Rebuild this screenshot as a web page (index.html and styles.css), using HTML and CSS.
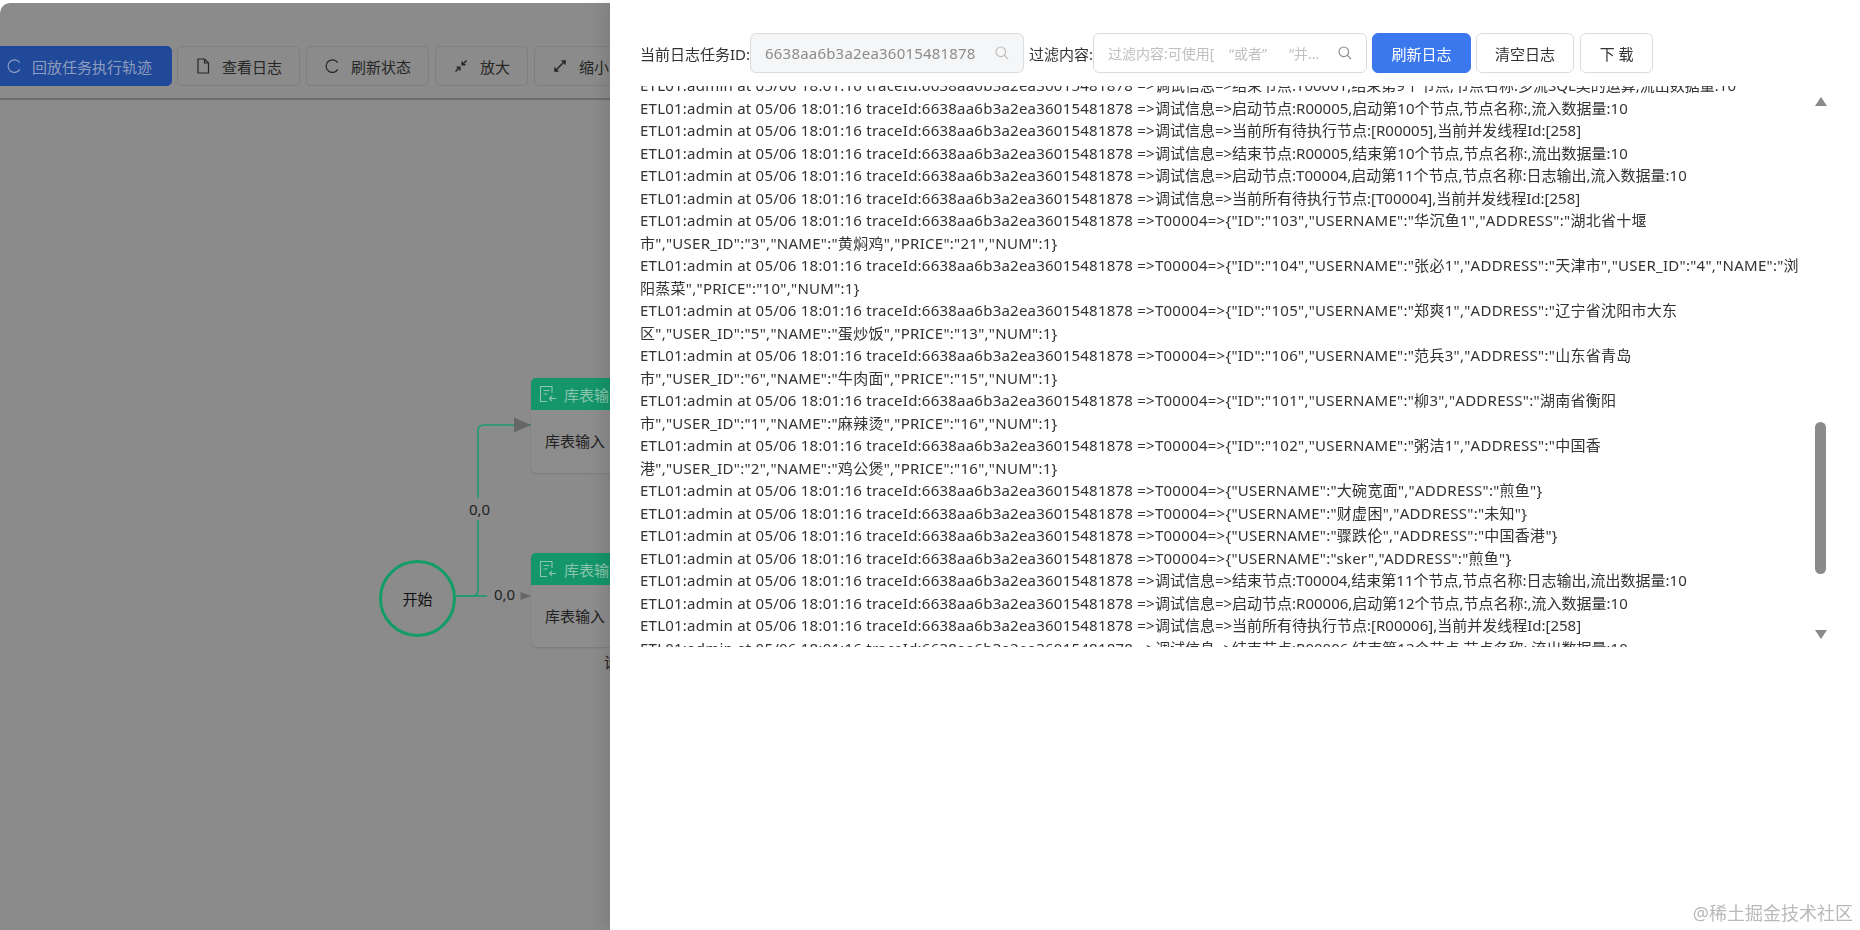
FILE: index.html
```html
<!DOCTYPE html>
<html lang="zh">
<head>
<meta charset="utf-8">
<title>任务执行日志</title>
<link rel="stylesheet" href="styles.css">
</head>
<body>
<div class="app">
  <div class="toolbar">
    <button class="tool tool-primary"><svg class="ico" viewBox="0 0 14 14"><path d="M12.6 3.6A6.3 6.3 0 1 0 12.8 10.4"/></svg>回放任务执行轨迹</button>
    <button class="tool"><svg class="ico" viewBox="0 0 14 16"><path d="M2 1h6.5L12.5 5v10H2z"/><path d="M8.5 1v4h4"/></svg>查看日志</button>
    <button class="tool"><svg class="ico" viewBox="0 0 14 14"><path d="M12.6 3.6A6.3 6.3 0 1 0 12.8 10.4"/></svg>刷新状态</button>
    <button class="tool"><svg class="ico ico-heavy" viewBox="0 0 14 14"><path d="M1.5 12.5L5.5 8.5M5.8 11.4V8.2H2.6M12.5 1.5L8.5 5.5M8.2 2.6v3.2h3.2"/></svg>放大</button>
    <button class="tool"><svg class="ico ico-heavy" viewBox="0 0 14 14"><path d="M2 12L12 2M2 8.5V12h3.5M8.5 2H12v3.5"/></svg>缩小</button>
  </div>
  <div class="canvas">
    <svg class="edges" viewBox="0 0 610 830">
      <path class="edge" d="M456 496H472Q478 496 478 490V331Q478 325 484 325H531"/>
      <path class="edge" d="M456 496H487"/>
      <path class="arrow" d="M514 317.500L531 325L514 332.500z"/>
      <path class="arrow" d="M520.500 492L531 496L520.500 500z"/>
    </svg>
    <div class="start">开始</div>
    <span class="edge-label label-up">0,0</span>
    <span class="edge-label label-right">0,0</span>
    <div class="node node-a">
      <div class="node-head"><svg class="node-ico" viewBox="0 0 18 18"><path d="M13 8V1.500H1.500v15H8M4.500 5.500h6M4.500 9h4M17 13.500H10.500M13 11l-2.500 2.500L13 16"/></svg>库表输入</div>
      <div class="node-body">库表输入</div>
    </div>
    <div class="node node-b">
      <div class="node-head"><svg class="node-ico" viewBox="0 0 18 18"><path d="M13 8V1.500H1.500v15H8M4.500 5.500h6M4.500 9h4M17 13.500H10.500M13 11l-2.500 2.500L13 16"/></svg>库表输入</div>
      <div class="node-body">库表输入</div>
    </div>
    <span class="node-caption">设</span>
  </div>
</div>

<aside class="drawer">
  <div class="filter-row">
    <label class="filter-label">当前日志任务ID:</label>
    <div class="field field-disabled field-id"><span class="field-text field-value">6638aa6b3a2ea36015481878</span><svg class="search" viewBox="0 0 14 14"><circle cx="5.800" cy="5.800" r="4.800"/><path d="M9.400 9.400L13 13"/></svg></div>
    <label class="filter-label">过滤内容:</label>
    <div class="field field-filter"><span class="field-text field-hint">过滤内容:可使用[&nbsp;&nbsp;&nbsp;&nbsp;“或者”&nbsp;&nbsp;&nbsp;&nbsp;&nbsp;&nbsp;“并...</span><svg class="search search-dark" viewBox="0 0 14 14"><circle cx="5.800" cy="5.800" r="4.800"/><path d="M9.400 9.400L13 13"/></svg></div>
    <button class="btn btn-primary">刷新日志</button>
    <button class="btn btn-clear">清空日志</button>
    <button class="btn btn-down">下 载</button>
  </div>
  <div class="log-wrap">
    <div class="log">
      <div class="log-inner">
        <p class="line"><span class="prefix">ETL01:admin at 05/06 18:01:16 traceId:6638aa6b3a2ea36015481878 =&gt;</span>调试信息=&gt;结束节点:T00001,结束第9个节点,节点名称:多流SQL类的运算,流出数据量:10</p>
        <p class="line"><span class="prefix">ETL01:admin at 05/06 18:01:16 traceId:6638aa6b3a2ea36015481878 =&gt;</span>调试信息=&gt;启动节点:R00005,启动第10个节点,节点名称:,流入数据量:10</p>
        <p class="line"><span class="prefix">ETL01:admin at 05/06 18:01:16 traceId:6638aa6b3a2ea36015481878 =&gt;</span>调试信息=&gt;当前所有待执行节点:[R00005],当前并发线程Id:[258]</p>
        <p class="line"><span class="prefix">ETL01:admin at 05/06 18:01:16 traceId:6638aa6b3a2ea36015481878 =&gt;</span>调试信息=&gt;结束节点:R00005,结束第10个节点,节点名称:,流出数据量:10</p>
        <p class="line"><span class="prefix">ETL01:admin at 05/06 18:01:16 traceId:6638aa6b3a2ea36015481878 =&gt;</span>调试信息=&gt;启动节点:T00004,启动第11个节点,节点名称:日志输出,流入数据量:10</p>
        <p class="line"><span class="prefix">ETL01:admin at 05/06 18:01:16 traceId:6638aa6b3a2ea36015481878 =&gt;</span>调试信息=&gt;当前所有待执行节点:[T00004],当前并发线程Id:[258]</p>
        <p class="line line-data"><span class="prefix">ETL01:admin at 05/06 18:01:16 traceId:6638aa6b3a2ea36015481878 =&gt;</span>T00004=&gt;{"ID":"103","USERNAME":"华沉鱼1","ADDRESS":"湖北省十堰<br>市","USER_ID":"3","NAME":"黄焖鸡","PRICE":"21","NUM":1}</p>
        <p class="line line-data"><span class="prefix">ETL01:admin at 05/06 18:01:16 traceId:6638aa6b3a2ea36015481878 =&gt;</span>T00004=&gt;{"ID":"104","USERNAME":"张必1","ADDRESS":"天津市","USER_ID":"4","NAME":"浏<br>阳蒸菜","PRICE":"10","NUM":1}</p>
        <p class="line line-data"><span class="prefix">ETL01:admin at 05/06 18:01:16 traceId:6638aa6b3a2ea36015481878 =&gt;</span>T00004=&gt;{"ID":"105","USERNAME":"郑爽1","ADDRESS":"辽宁省沈阳市大东<br>区","USER_ID":"5","NAME":"蛋炒饭","PRICE":"13","NUM":1}</p>
        <p class="line line-data"><span class="prefix">ETL01:admin at 05/06 18:01:16 traceId:6638aa6b3a2ea36015481878 =&gt;</span>T00004=&gt;{"ID":"106","USERNAME":"范兵3","ADDRESS":"山东省青岛<br>市","USER_ID":"6","NAME":"牛肉面","PRICE":"15","NUM":1}</p>
        <p class="line line-data"><span class="prefix">ETL01:admin at 05/06 18:01:16 traceId:6638aa6b3a2ea36015481878 =&gt;</span>T00004=&gt;{"ID":"101","USERNAME":"柳3","ADDRESS":"湖南省衡阳<br>市","USER_ID":"1","NAME":"麻辣烫","PRICE":"16","NUM":1}</p>
        <p class="line line-data"><span class="prefix">ETL01:admin at 05/06 18:01:16 traceId:6638aa6b3a2ea36015481878 =&gt;</span>T00004=&gt;{"ID":"102","USERNAME":"粥洁1","ADDRESS":"中国香<br>港","USER_ID":"2","NAME":"鸡公煲","PRICE":"16","NUM":1}</p>
        <p class="line line-data"><span class="prefix">ETL01:admin at 05/06 18:01:16 traceId:6638aa6b3a2ea36015481878 =&gt;</span>T00004=&gt;{"USERNAME":"大碗宽面","ADDRESS":"煎鱼"}</p>
        <p class="line line-data"><span class="prefix">ETL01:admin at 05/06 18:01:16 traceId:6638aa6b3a2ea36015481878 =&gt;</span>T00004=&gt;{"USERNAME":"财虚困","ADDRESS":"未知"}</p>
        <p class="line line-data"><span class="prefix">ETL01:admin at 05/06 18:01:16 traceId:6638aa6b3a2ea36015481878 =&gt;</span>T00004=&gt;{"USERNAME":"骤跌伦","ADDRESS":"中国香港"}</p>
        <p class="line line-data"><span class="prefix">ETL01:admin at 05/06 18:01:16 traceId:6638aa6b3a2ea36015481878 =&gt;</span>T00004=&gt;{"USERNAME":"sker","ADDRESS":"煎鱼"}</p>
        <p class="line"><span class="prefix">ETL01:admin at 05/06 18:01:16 traceId:6638aa6b3a2ea36015481878 =&gt;</span>调试信息=&gt;结束节点:T00004,结束第11个节点,节点名称:日志输出,流出数据量:10</p>
        <p class="line"><span class="prefix">ETL01:admin at 05/06 18:01:16 traceId:6638aa6b3a2ea36015481878 =&gt;</span>调试信息=&gt;启动节点:R00006,启动第12个节点,节点名称:,流入数据量:10</p>
        <p class="line"><span class="prefix">ETL01:admin at 05/06 18:01:16 traceId:6638aa6b3a2ea36015481878 =&gt;</span>调试信息=&gt;当前所有待执行节点:[R00006],当前并发线程Id:[258]</p>
        <p class="line"><span class="prefix">ETL01:admin at 05/06 18:01:16 traceId:6638aa6b3a2ea36015481878 =&gt;</span>调试信息=&gt;结束节点:R00006,结束第12个节点,节点名称:,流出数据量:10</p>
      </div>
    </div>
    <div class="scrollbar">
      <span class="scroll-up"></span>
      <span class="scroll-thumb"></span>
      <span class="scroll-down"></span>
    </div>
  </div>
</aside>
<span class="watermark">@稀土掘金技术社区</span>
</body>
</html>
```
FILE: styles.css
```css
* { box-sizing: border-box; }
html, body { margin: 0; height: 100%; }
body {
  background: #fff;
  overflow: hidden;
  font-family: "Noto Sans", "Noto Sans CJK SC", sans-serif;
  font-size: 15px;
  color: #222;
}
button { font: inherit; }

.app {
  height: 927px;
  margin-top: 3px;
  background: #8b8b8b;
  border-top-left-radius: 10px;
  overflow: hidden;
  display: flex;
  flex-direction: column;
}
.toolbar {
  height: 97px;
  flex: none;
  display: flex;
  align-items: flex-start;
  gap: 6px;
  padding: 43px 0 0;
  margin-left: -9px;
  border-bottom: 2px solid #6e6e6e;
}
.tool {
  height: 40px;
  padding: 0 17px 0 18px;
  display: flex;
  align-items: center;
  gap: 12px;
  border: 1px solid #7f7f7f;
  border-radius: 5px;
  background: #8b8b8b;
  color: #262626;
  flex: none;
}
.tool-primary {
  padding-left: 15px;
  padding-right: 19px;
  gap: 11px;
  background: #21499a;
  border-color: #21499a;
  color: #8d9dbd;
  margin-right: -1px;
}
.ico {
  width: 14px;
  height: 16px;
  fill: none;
  stroke: currentColor;
  stroke-width: 1.2;
  flex: none;
}
.ico-heavy { stroke-width: 1.5; }

.canvas { position: relative; flex: 1; }
.edges { position: absolute; left: 0; top: 0; width: 610px; height: 830px; }
.edge { fill: none; stroke: #1a9c6c; stroke-width: 1.6; }
.arrow { fill: #666; }
.start {
  position: absolute;
  left: 379px;
  top: 460px;
  width: 77px;
  height: 77px;
  border-radius: 50%;
  border: 3px solid #149c68;
  display: flex;
  align-items: center;
  justify-content: center;
  color: #111;
}
.edge-label {
  position: absolute;
  padding: 0 2px;
  background: #8b8b8b;
  line-height: 22px;
  color: #222;
}
.label-up { left: 467px; top: 398px; }
.label-right { left: 492px; top: 483px; }
.node {
  position: absolute;
  left: 531px;
  width: 180px;
  border-radius: 5px;
  overflow: hidden;
  background: #8d8d8d;
  box-shadow: 0 1px 2px rgba(0, 0, 0, .12);
}
.node-a { top: 278px; height: 95px; }
.node-b { top: 453px; height: 94px; }
.node-head {
  height: 32px;
  background: #14966a;
  color: #8cc5ad;
  display: flex;
  align-items: center;
  gap: 7px;
  padding-left: 8px;
}
.node-ico { width: 18px; height: 18px; fill: none; stroke: #8cc5ad; stroke-width: 1.1; flex: none; }
.node-body { padding: 20px 0 0 14px; line-height: 22px; color: #222; }
.node-caption { position: absolute; left: 604px; top: 551px; color: #222; }

.drawer {
  position: fixed;
  top: 0;
  right: 0;
  bottom: 0;
  width: 1250px;
  padding: 33px 0 0 30px;
  background: #fff;
  box-shadow: -6px 0 16px rgba(0, 0, 0, .1);
  color: #333;
}
.filter-row { display: flex; align-items: center; height: 40px; }
.filter-label { white-space: nowrap; }
.field {
  height: 40px;
  display: flex;
  align-items: center;
  justify-content: space-between;
  border: 1px solid #dcdcdc;
  border-radius: 6px;
  padding: 0 14px;
  flex: none;
}
.field-disabled { background: #f5f6f7; color: #8c8c8c; }
.field-id { width: 274px; margin: 0 5px 0 0; padding-left: 14px; }
.field-filter { width: 274px; margin-right: 5px; }
.field-text { white-space: nowrap; overflow: hidden; font-size: 15px; }
.field-value { letter-spacing: .2px; }
.field-hint { color: #c0c0c0; font-size: 14px; }
.search { width: 14px; height: 14px; fill: none; stroke: #bdbdbd; stroke-width: 1.2; flex: none; }
.search-dark { stroke: #8c8c8c; }
.btn {
  height: 40px;
  flex: none;
  border: 1px solid #dcdcdc;
  border-radius: 6px;
  background: #fff;
  color: #333;
  padding: 0;
}
.btn-primary { width: 99px; margin-right: 5px; background: #3b78ee; border-color: #3b78ee; color: #fff; }
.btn-clear { width: 98px; margin-right: 6px; }
.btn-down { width: 73px; }

.log-wrap { display: flex; margin-top: 13px; height: 561px; }
.log { width: 1175px; flex: none; overflow: hidden; }
.log-inner { margin-top: -12px; }
.line {
  margin: 0;
  font-size: 15px;
  line-height: 22.5px;
  white-space: nowrap;
  color: #333;
}
.line-data { letter-spacing: .27px; }
.prefix { letter-spacing: .23px; }
.scrollbar {
  width: 11px;
  margin-left: 0;
  display: flex;
  flex-direction: column;
  align-items: center;
  flex: none;
}
.scroll-up, .scroll-down { width: 0; height: 0; border-left: 6px solid transparent; border-right: 6px solid transparent; }
.scroll-up { margin-top: 11px; border-bottom: 9px solid #8a8a8a; }
.scroll-thumb { width: 11px; height: 152px; margin-top: 316px; border-radius: 5.5px; background: #8a8a8a; }
.scroll-down { margin-top: 56px; border-top: 9px solid #8a8a8a; }

.watermark {
  position: fixed;
  right: 7px;
  bottom: 4px;
  font-size: 18px;
  line-height: 26px;
  color: #b9b9b9;
}
```
